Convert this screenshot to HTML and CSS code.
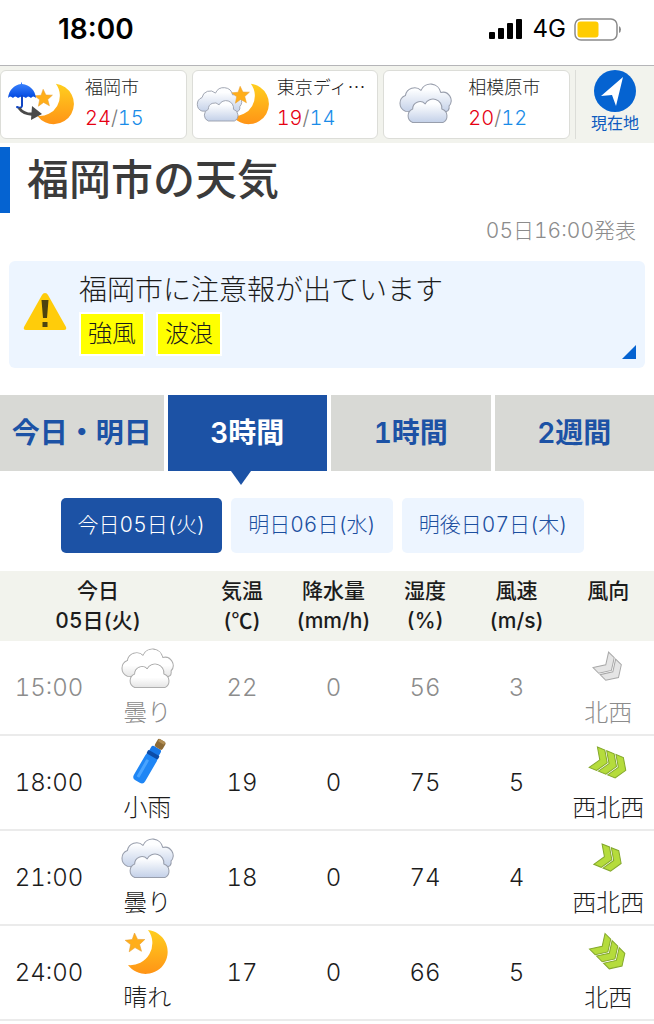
FILE: index.html
```
<!DOCTYPE html>
<html lang="ja">
<head>
    <meta charset="UTF-8" />
    <meta name="viewport" content="width=device-width, initial-scale=1" />
    <title>福岡市の天気</title>
    <link rel="stylesheet" href="styles.css">
</head>
<body>
    <!-- 天気アイコン -->
    <svg class="defs" width="0" height="0" aria-hidden="true">
        <defs>
            <linearGradient id="g-cloud" x1="0" y1="0" x2="0" y2="1">
                <stop offset="0.2" stop-color="#fdfeff" />
                <stop offset="1" stop-color="#c3d0e8" />
            </linearGradient>
            <linearGradient id="g-moon" x1="0" y1="0" x2="0" y2="1">
                <stop offset="0" stop-color="#ffcf1f" />
                <stop offset="1" stop-color="#ff9416" />
            </linearGradient>
            <linearGradient id="g-umbrella" x1="0" y1="0" x2="0" y2="1">
                <stop offset="0" stop-color="#3f86ff" />
                <stop offset="1" stop-color="#0047e0" />
            </linearGradient>
            <g id="cloud" stroke="#989eac" stroke-width="1" stroke-linejoin="round" fill="url(#g-cloud)">
                <path d="M10 29A8 8 0 0 1 10 14A9 9 0 0 1 25 9A10 10 0 0 1 44 11A8 8 0 0 1 52 24Q53 30 46 30Z" />
                <path d="M17 40A7 7 0 0 1 17 27A7 7 0 0 1 29 22A8.5 8.5 0 0 1 45 27A7 7 0 0 1 46 40Z" />
            </g>
            <path id="moon" fill="url(#g-moon)" d="M27 3A22 22 0 1 1 7 38A22 22 0 0 0 27 3Z" />
            <path id="star" fill="#ffae1a" stroke="#e8a033" stroke-width="0.6" d="M13.5 7L16.6 13.4L23.8 13.5L18.6 18.4L20.5 25.3L14 21.6L8.2 25.8L9.6 18.6L4.2 14.3L11.2 13.6Z" />
            <path id="chevron" d="M-8 -11H0L7 0L0 11H-8L-1 0Z" />
        </defs>
    </svg>

    <div class="status-bar">
        <span class="clock">18:00</span>
        <span class="status-icons">
            <svg width="36" height="24" viewBox="0 0 36 24" aria-hidden="true">
                <rect x="0" y="15" width="6" height="7" rx="1" />
                <rect x="9" y="11" width="6" height="11" rx="1" />
                <rect x="18" y="6" width="6" height="16" rx="1" />
                <rect x="27" y="2" width="6" height="20" rx="1" />
            </svg>
            <span class="network">4G</span>
            <svg width="48" height="24" viewBox="0 0 48 24" aria-hidden="true">
                <rect x="1" y="2" width="42" height="21" rx="6" fill="none" stroke="#8a8a8a" stroke-width="1.5" />
                <rect x="3.5" y="4.5" width="21" height="16" rx="3" fill="#ffcc00" />
                <path d="M45 9Q47 10 47 12.5T45 16Z" fill="#8a8a8a" />
            </svg>
        </span>
    </div>

    <nav class="places">
        <a class="place" href="#">
            <svg width="80" height="48" viewBox="0 0 80 48" aria-hidden="true">
                <use href="#moon" transform="translate(30 0) scale(0.92)" />
                <use href="#star" transform="translate(30 2) scale(0.9)" />
                <path fill="url(#g-umbrella)" d="M21 1.5V3C29 4 34 9 35 17Q32 14 30 17Q27 14 25 17Q21 14 17 17Q14 14 12 17Q9 14 7 17C8 9 13 4 20 3V1.5Z" />
                <path fill="none" stroke="#1247c4" stroke-width="2" stroke-linecap="round" d="M21 15V25Q20 28 16 26" />
                <path fill="none" stroke="#4a4a4a" stroke-width="3" d="M18 27Q23 34 33 33" />
                <path fill="#4a4a4a" d="M31 25L41 33L30 39Z" />
            </svg>
            <span class="place-text">
                <span class="place-name">福岡市</span>
                <span class="temps"><span class="high">24</span>/<span class="low">15</span></span>
            </span>
        </a>
        <a class="place" href="#">
            <svg width="80" height="48" viewBox="0 0 80 48" aria-hidden="true">
                <use href="#moon" transform="translate(33 0) scale(0.92)" />
                <use href="#cloud" transform="translate(0 4) scale(0.9)" />
                <use href="#star" transform="translate(35 -1) scale(0.9)" />
            </svg>
            <span class="place-text">
                <span class="place-name">東京ディ…</span>
                <span class="temps"><span class="high">19</span>/<span class="low">14</span></span>
            </span>
        </a>
        <a class="place" href="#">
            <svg width="80" height="48" viewBox="0 0 80 48" aria-hidden="true">
                <use href="#cloud" transform="translate(11 0) scale(1.04)" />
            </svg>
            <span class="place-text">
                <span class="place-name">相模原市</span>
                <span class="temps"><span class="high">20</span>/<span class="low">12</span></span>
            </span>
        </a>
        <a class="here" href="#">
            <svg width="42" height="42" viewBox="0 0 42 42" aria-hidden="true">
                <circle cx="21" cy="21" r="21" fill="#0563d1" />
                <path d="M29 7L22 36L18 25L7 26Z" fill="#fff" />
            </svg>
            現在地
        </a>
    </nav>

    <main>
        <h1>福岡市の天気</h1>
        <p class="announced">05日16:00発表</p>

        <a class="alert" href="#">
            <svg width="44" height="38" viewBox="0 0 44 38" aria-hidden="true">
                <path d="M22 0Q24 0 25 2L43 34Q44 37 41 37H3Q0 37 1 34L19 2Q20 0 22 0Z" fill="#ffcc0a" />
                <path d="M18.5 7H25.5L24 25H20ZM19.5 29H24.5V34H19.5Z" fill="#4d4310" />
            </svg>
            <span class="alert-body">
                <span class="alert-title">福岡市に注意報が出ています</span>
                <span class="tags">
                    <span class="tag">強風</span>
                    <span class="tag">波浪</span>
                </span>
            </span>
        </a>

        <nav class="tabs">
            <a href="#">今日・明日</a>
            <a href="#" class="active">3時間</a>
            <a href="#">1時間</a>
            <a href="#">2週間</a>
        </nav>

        <div class="days">
            <button type="button" class="active">今日05日(火)</button>
            <button type="button">明日06日(水)</button>
            <button type="button">明後日07日(木)</button>
        </div>

        <table class="forecast">
            <thead>
                <tr>
                    <th class="date" colspan="2">今日<br>05日(火)</th>
                    <th>気温<br>(<span class="unit">℃</span>)</th>
                    <th>降水量<br>(mm/h)</th>
                    <th>湿度<br>(%)</th>
                    <th>風速<br>(m/s)</th>
                    <th>風向</th>
                </tr>
            </thead>
            <tbody>
                <tr class="past">
                    <td>15:00</td>
                    <td class="pic">
                        <svg width="60" height="50" viewBox="0 0 60 50" aria-hidden="true"><use href="#cloud" transform="translate(0 3) scale(1.04)" /></svg>
                        曇り
                    </td>
                    <td>22</td>
                    <td>0</td>
                    <td>56</td>
                    <td>3</td>
                    <td class="pic wind">
                        <svg width="60" height="50" viewBox="0 0 60 50" aria-hidden="true">
                            <g transform="translate(32 26) rotate(45)"><use href="#chevron" x="-5" /><use href="#chevron" x="5" /></g>
                        </svg>
                        北西
                    </td>
                </tr>
                <tr>
                    <td>18:00</td>
                    <td class="pic">
                        <svg width="60" height="50" viewBox="0 0 60 50" aria-hidden="true">
                            <g transform="translate(33 23) rotate(30)">
                                <rect x="-6" y="-15" width="11" height="10" rx="2" fill="#1677e8" />
                                <rect x="-7" y="-7" width="13" height="31" rx="4" fill="#1f86f5" />
                                <rect x="-4" y="0" width="3" height="20" rx="1" fill="#49a4ff" />
                                <rect x="-7" y="-9" width="13" height="4" rx="1" fill="#0c4ca8" />
                                <rect x="-4" y="-24" width="9" height="9" rx="2" fill="#8c6a36" />
                                <rect x="-3" y="-24" width="7" height="3" rx="1" fill="#b08d52" />
                            </g>
                        </svg>
                        小雨
                    </td>
                    <td>19</td>
                    <td>0</td>
                    <td>75</td>
                    <td>5</td>
                    <td class="pic wind">
                        <svg width="60" height="50" viewBox="0 0 60 50" aria-hidden="true">
                            <g transform="translate(32 26) rotate(22)"><use href="#chevron" x="-10" /><use href="#chevron" /><use href="#chevron" x="10" /></g>
                        </svg>
                        西北西
                    </td>
                </tr>
                <tr>
                    <td>21:00</td>
                    <td class="pic">
                        <svg width="60" height="50" viewBox="0 0 60 50" aria-hidden="true"><use href="#cloud" transform="translate(0 3) scale(1.04)" /></svg>
                        曇り
                    </td>
                    <td>18</td>
                    <td>0</td>
                    <td>74</td>
                    <td>4</td>
                    <td class="pic wind">
                        <svg width="60" height="50" viewBox="0 0 60 50" aria-hidden="true">
                            <g transform="translate(32 26) rotate(22)"><use href="#chevron" x="-5" /><use href="#chevron" x="5" /></g>
                        </svg>
                        西北西
                    </td>
                </tr>
                <tr>
                    <td>24:00</td>
                    <td class="pic">
                        <svg width="60" height="50" viewBox="0 0 60 50" aria-hidden="true"><use href="#moon" x="4" y="-1" /><use href="#star" x="4" y="-2" /></svg>
                        晴れ
                    </td>
                    <td>17</td>
                    <td>0</td>
                    <td>66</td>
                    <td>5</td>
                    <td class="pic wind">
                        <svg width="60" height="50" viewBox="0 0 60 50" aria-hidden="true">
                            <g transform="translate(32 26) rotate(45)"><use href="#chevron" x="-10" /><use href="#chevron" /><use href="#chevron" x="10" /></g>
                        </svg>
                        北西
                    </td>
                </tr>
            </tbody>
        </table>
    </main>
</body>
</html>
```

FILE: styles.css
```
* {
    box-sizing: border-box;
}
body {
    margin: 0;
    background-color: #fff;
    color: #1c1c1c;
    font-family: Inter, "Noto Sans CJK JP", sans-serif;
    font-size: 21px;
    font-weight: 300;
    font-variant-numeric: tabular-nums;
}
a {
    color: inherit;
    text-decoration: none;
}
svg {
    display: block;
    flex: none;
}
.defs {
    position: absolute;
}

/* ステータスバー */
.status-bar {
    display: flex;
    justify-content: space-between;
    align-items: center;
    height: 66px;
    padding: 0 32px 8px 58px;
    border-bottom: 1px solid #b5b5b8;
    color: #000;
}
.clock {
    font-size: 28px;
    font-weight: 600;
    font-variant-numeric: normal;
}
.status-icons {
    display: flex;
    align-items: center;
    gap: 8px;
}
.network {
    font-size: 24px;
    font-weight: 400;
}

/* 登録地点 */
.places {
    display: flex;
    gap: 5px;
    padding: 4px 0;
    background-color: #f2f3ed;
}
.place {
    display: flex;
    flex: 1;
    align-items: center;
    gap: 4px;
    height: 69px;
    background-color: #fff;
    border: 1px solid #dcddd8;
    border-radius: 6px;
}
.place-text {
    display: flex;
    flex-direction: column;
    padding-bottom: 6px;
    white-space: nowrap;
}
.place-name {
    font-family: "Noto Sans CJK JP", sans-serif;
    font-size: 18px;
    line-height: 32px;
}
.temps {
    font-size: 20px;
    line-height: 32px;
    color: #777;
}
.high {
    color: #e60012;
}
.low {
    color: #1a8ce8;
}
.here {
    display: flex;
    flex-direction: column;
    align-items: center;
    width: 79px;
    border-left: 1px solid #dcddd8;
    color: #0e5bbf;
    font-size: 16px;
    font-weight: 400;
    line-height: 22px;
}

/* 見出し */
h1 {
    margin: 4px 0 0;
    padding-left: 17px;
    border-left: 10px solid #0563d1;
    color: #3b3b3b;
    font-size: 42px;
    font-weight: 500;
    line-height: 66px;
}
.announced {
    margin: 0;
    padding-right: 18px;
    color: #8c8c8c;
    line-height: 36px;
    text-align: right;
}

/* 注意報 */
.alert {
    position: relative;
    display: flex;
    align-items: center;
    gap: 12px;
    margin: 12px 9px 27px;
    padding: 7px 14px 12px;
    background-color: #edf5ff;
    border-radius: 6px;
}
.alert::after {
    content: "";
    position: absolute;
    right: 9px;
    bottom: 9px;
    border-left: 14px solid transparent;
    border-bottom: 14px solid #0563d1;
}
.alert-title {
    display: block;
    font-size: 28px;
    line-height: 44px;
}
.tags {
    display: flex;
    gap: 11px;
}
.tag {
    padding: 0 7px;
    border: 2px solid #fff;
    background-color: #ff0;
    font-size: 24px;
    line-height: 40px;
}

/* タブ */
.tabs {
    display: flex;
}
.tabs a {
    position: relative;
    width: 25%;
    background-color: #d8d9d5;
    color: #1c52a5;
    font-size: 28px;
    font-weight: 600;
    line-height: 76px;
    text-align: center;
    white-space: nowrap;
}
.tabs a + a {
    border-left: 4px solid #fff;
}
.tabs .active {
    background-color: #1c52a5;
    color: #fff;
}
.tabs .active::after {
    content: "";
    position: absolute;
    top: 100%;
    left: calc(50% - 16px);
    border: 10px solid transparent;
    border-top: 14px solid #1c52a5;
    border-bottom: 0;
}

/* 日付の切り替え */
.days {
    display: flex;
    justify-content: center;
    gap: 9px;
    padding: 27px 9px 18px 0;
}
.days button {
    height: 55px;
    padding: 0 17px 5px;
    border: 0;
    border-radius: 5px;
    background-color: #edf5ff;
    color: #1c4f9f;
    font: inherit;
    font-variant-numeric: tabular-nums;
    white-space: nowrap;
}
.days .active {
    background-color: #1c52a5;
    color: #fff;
}

/* 3時間ごとの予報 */
.forecast {
    width: 100%;
    border-collapse: separate;
    border-spacing: 0;
    table-layout: fixed;
}
.forecast th {
    width: 14%;
    padding: 5px 0;
    background-color: #f2f3ed;
    font-weight: 500;
    line-height: 30px;
    vertical-align: top;
    white-space: nowrap;
}
.forecast .date {
    width: 30%;
}
.unit {
    font-family: "Noto Sans CJK JP", sans-serif;
    line-height: 1;
}
.forecast td {
    padding: 0;
    border-bottom: 2px solid #ebebeb;
    font-size: 24px;
    text-align: center;
    white-space: nowrap;
}
.forecast .pic {
    padding: 2px 0 1px;
    line-height: 40px;
}
.pic svg {
    margin: 0 auto;
}
.wind svg {
    fill: #b5dc3c;
    stroke: #84a82c;
    stroke-width: 1;
}
.past {
    color: #8c8c8c;
}
.past .pic svg {
    filter: grayscale(1) brightness(1.1);
}
.past .wind svg {
    fill: #d0d0d0;
    stroke: #999;
}
```
